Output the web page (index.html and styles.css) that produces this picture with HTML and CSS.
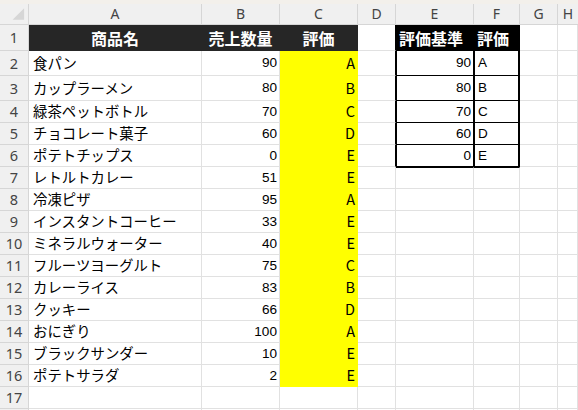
FILE: index.html
```html
<!DOCTYPE html>
<html lang="ja">
<head>
<meta charset="utf-8">
<title>Sheet</title>
<link rel="stylesheet" href="styles.css">
</head>
<body>
<div class="band"></div>
<div class="sheet">
  <div class="c hd corner"><svg width="29" height="21" viewBox="0 0 29 21"><polygon points="25,4 25,16 13,16" fill="#d6d6d6"/></svg></div>
  <div class="c hd">A</div><div class="c hd">B</div><div class="c hd">C</div><div class="c hd">D</div><div class="c hd">E</div><div class="c hd">F</div><div class="c hd">G</div><div class="c hd last">H</div>

  <div class="c rh">1</div>
  <div class="c th">商品名</div><div class="c th">売上数量</div><div class="c th">評価</div><div class="c dR"></div><div class="c tk">評価基準</div><div class="c tk">評価</div><div class="c gL"></div><div class="c"></div>

  <div class="c rh">2</div>
  <div class="c txt">食パン</div><div class="c num">90</div><div class="c ev">A</div><div class="c dR"></div><div class="c num tb tE tT">90</div><div class="c lt tb tF tT">A</div><div class="c gL"></div><div class="c"></div>

  <div class="c rh">3</div>
  <div class="c txt">カップラーメン</div><div class="c num">80</div><div class="c ev">B</div><div class="c dR"></div><div class="c num tb tE">80</div><div class="c lt tb tF">B</div><div class="c gL"></div><div class="c"></div>

  <div class="c rh">4</div>
  <div class="c txt">緑茶ペットボトル</div><div class="c num">70</div><div class="c ev">C</div><div class="c dR"></div><div class="c num tb tE">70</div><div class="c lt tb tF">C</div><div class="c gL"></div><div class="c"></div>

  <div class="c rh">5</div>
  <div class="c txt">チョコレート菓子</div><div class="c num">60</div><div class="c ev">D</div><div class="c dR"></div><div class="c num tb tE">60</div><div class="c lt tb tF">D</div><div class="c gL"></div><div class="c"></div>

  <div class="c rh">6</div>
  <div class="c txt">ポテトチップス</div><div class="c num">0</div><div class="c ev">E</div><div class="c dR"></div><div class="c num tb tE">0</div><div class="c lt tb tF">E</div><div class="c gL"></div><div class="c"></div>

  <div class="c rh">7</div>
  <div class="c txt">レトルトカレー</div><div class="c num">51</div><div class="c ev">E</div><div class="c"></div><div class="c tU"></div><div class="c tU"></div><div class="c"></div><div class="c"></div>

  <div class="c rh">8</div>
  <div class="c txt">冷凍ピザ</div><div class="c num">95</div><div class="c ev">A</div><div class="c"></div><div class="c"></div><div class="c"></div><div class="c"></div><div class="c"></div>

  <div class="c rh">9</div>
  <div class="c txt">インスタントコーヒー</div><div class="c num">33</div><div class="c ev">E</div><div class="c"></div><div class="c"></div><div class="c"></div><div class="c"></div><div class="c"></div>

  <div class="c rh">10</div>
  <div class="c txt">ミネラルウォーター</div><div class="c num">40</div><div class="c ev">E</div><div class="c"></div><div class="c"></div><div class="c"></div><div class="c"></div><div class="c"></div>

  <div class="c rh">11</div>
  <div class="c txt">フルーツヨーグルト</div><div class="c num">75</div><div class="c ev">C</div><div class="c"></div><div class="c"></div><div class="c"></div><div class="c"></div><div class="c"></div>

  <div class="c rh">12</div>
  <div class="c txt">カレーライス</div><div class="c num">83</div><div class="c ev">B</div><div class="c"></div><div class="c"></div><div class="c"></div><div class="c"></div><div class="c"></div>

  <div class="c rh">13</div>
  <div class="c txt">クッキー</div><div class="c num">66</div><div class="c ev">D</div><div class="c"></div><div class="c"></div><div class="c"></div><div class="c"></div><div class="c"></div>

  <div class="c rh">14</div>
  <div class="c txt">おにぎり</div><div class="c num">100</div><div class="c ev">A</div><div class="c"></div><div class="c"></div><div class="c"></div><div class="c"></div><div class="c"></div>

  <div class="c rh">15</div>
  <div class="c txt">ブラックサンダー</div><div class="c num">10</div><div class="c ev">E</div><div class="c"></div><div class="c"></div><div class="c"></div><div class="c"></div><div class="c"></div>

  <div class="c rh">16</div>
  <div class="c txt">ポテトサラダ</div><div class="c num">2</div><div class="c ev">E</div><div class="c"></div><div class="c"></div><div class="c"></div><div class="c"></div><div class="c"></div>

  <div class="c rh">17</div>
  <div class="c"></div><div class="c"></div><div class="c"></div><div class="c"></div><div class="c"></div><div class="c"></div><div class="c"></div><div class="c"></div>

  <div class="c rh"></div>
  <div class="c"></div><div class="c"></div><div class="c"></div><div class="c"></div><div class="c"></div><div class="c"></div><div class="c"></div><div class="c"></div>
</div>
</body>
</html>
```

FILE: styles.css
```css
html, body {
  margin: 0;
  padding: 0;
  background: #ffffff;
}
body {
  width: 578px;
  height: 410px;
  overflow: hidden;
}
.band {
  height: 4px;
  background: #f3f0eb;
}
.sheet {
  display: grid;
  grid-template-columns: 29px 173px 78px 78px 38px 78px 46px 38px 1fr;
  grid-template-rows: 21px 26px 25px 25px repeat(15, 22px);
}
.c {
  box-sizing: border-box;
  border-right: 1px solid #e1e1e1;
  border-bottom: 1px solid #e1e1e1;
  display: flex;
  align-items: center;
  overflow: hidden;
  white-space: nowrap;
  line-height: 1;
  color: #000;
}
.hd, .rh {
  background: #f0f0f0;
  border-color: #d6d6d6;
  justify-content: center;
  font-family: "Noto Sans", "Open Sans", sans-serif;
  font-size: 14px;
  color: #444;
}
.hd.last {
  border-right: 0;
}
.corner {
  padding: 0;
  align-items: stretch;
}
.corner svg {
  display: block;
}
.rh {
  font-size: 14.5px;
}
.txt {
  font-family: "Noto Sans CJK JP", sans-serif;
  font-size: 14.4px;
  padding-left: 4px;
}
.num {
  justify-content: flex-end;
  padding-right: 2px;
  font-family: "Liberation Sans", Arial, sans-serif;
  font-size: 13.6px;
}
.lt {
  padding-left: 3px;
  font-family: "Liberation Sans", Arial, sans-serif;
  font-size: 13.5px;
}
.ev {
  background: #ffff00;
  border-color: #ffff00;
  justify-content: flex-end;
  padding-right: 2px;
  font-family: "Noto Sans CJK JP", sans-serif;
  font-size: 14.5px;
}
.th {
  background: #262626;
  border-color: #262626;
  justify-content: center;
  color: #fff;
  font-family: "Noto Sans CJK JP", sans-serif;
  font-weight: 700;
  font-size: 16px;
}
.tk {
  background: #000;
  border-color: #000;
  color: #fff;
  padding-left: 3px;
  font-family: "Noto Sans CJK JP", sans-serif;
  font-weight: 700;
  font-size: 16px;
}
.tk + .tk {
  border-right-width: 2px;
}
.dR {
  border-right-color: #000;
}
.tb {
  border-right-color: #000;
  border-bottom-color: #000;
}
.tE {
  border-left: 1px solid #000;
}
.tF {
  border-left: 1px solid #000;
  border-right-width: 2px;
}
.tU {
  border-top: 1px solid #000;
}
.gL {
  border-right-color: #e1e1e1;
}
```
